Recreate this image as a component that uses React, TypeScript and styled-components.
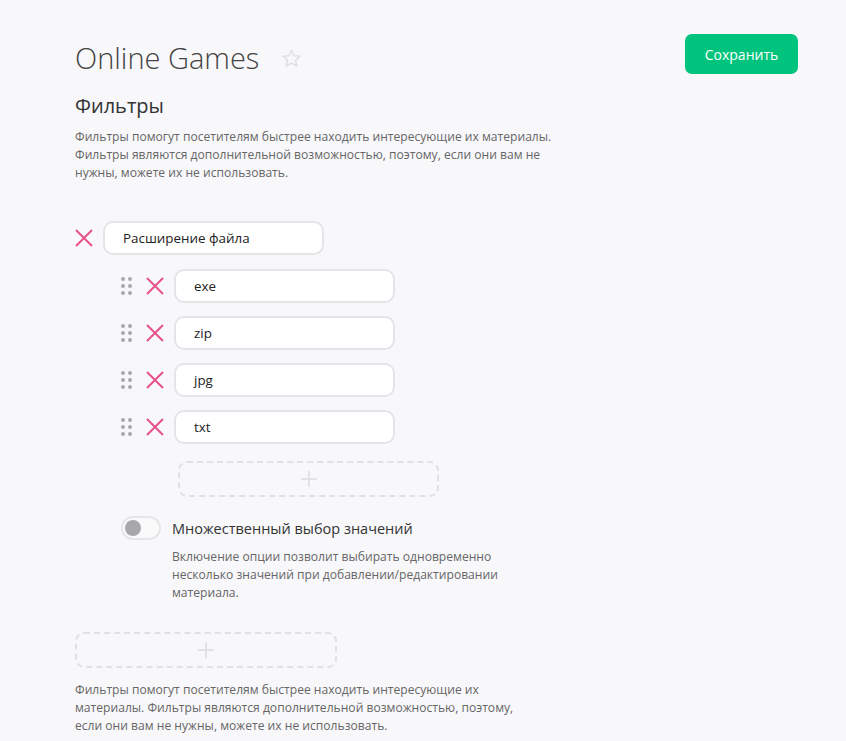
import React from "react";
import styled, { createGlobalStyle } from "styled-components";

const GlobalStyle = createGlobalStyle`
  html, body {
    margin: 0;
    background: #f8f8fb;
  }
  body {
    font-family: "Open Sans", "Noto Sans", sans-serif;
    color: #333;
  }
`;

const Page = styled.div`
  padding: 34px 48px 20px 75px;
`;

const Header = styled.div`
  display: flex;
  justify-content: space-between;
  align-items: flex-start;
`;

const TitleWrap = styled.div`
  display: flex;
  align-items: center;
  gap: 22px;
  margin-top: 4px;
`;

const Title = styled.h1`
  margin: 0;
  font-size: 29px;
  font-weight: 300;
  color: #444;
  line-height: 40px;
`;

const SaveButton = styled.button`
  width: 113px;
  height: 40px;
  border: none;
  border-radius: 7px;
  background: #00c47d;
  color: #fff;
  font-family: inherit;
  font-size: 14px;
`;

const Heading = styled.h2`
  margin: 14px 0 0;
  font-size: 20px;
  font-weight: 400;
  color: #333;
  line-height: 28px;
`;

const Note = styled.p<{ $width: number }>`
  margin: 0;
  max-width: ${(p) => p.$width}px;
  font-size: 12.1px;
  line-height: 18px;
  color: #666;
`;

const Intro = styled(Note)`
  margin-top: 8px;
`;

const Group = styled.div`
  margin-top: 39px;
`;

const Row = styled.div`
  display: flex;
  align-items: center;
  gap: 10px;
`;

const Field = styled.div`
  box-sizing: border-box;
  width: 221px;
  height: 34px;
  padding: 0 18px;
  display: flex;
  align-items: center;
  background: #fff;
  border: 2px solid #e4e4e9;
  border-radius: 10px;
  font-size: 13.4px;
  color: #222;
`;

const Values = styled.div`
  margin: 14px 0 0 46px;
  display: flex;
  flex-direction: column;
  gap: 13px;
`;

const ValueRow = styled(Row)`
  gap: 0;
`;

const Handle = styled.div`
  display: grid;
  grid-template-columns: repeat(2, 4px);
  grid-auto-rows: 4px;
  gap: 3px;
  margin-right: 14px;
`;

const Dot = styled.span`
  width: 4px;
  height: 4px;
  border-radius: 50%;
  background: #aaa;
`;

const Remove = styled.span`
  flex: none;
  display: flex;
  width: 18px;
  height: 18px;
`;

const ValueRemove = styled(Remove)`
  margin-right: 10px;
`;

const AddBox = styled.div<{ $width: number }>`
  box-sizing: border-box;
  width: ${(p) => p.$width}px;
  height: 36px;
  border: 2px dashed #e0e0e5;
  border-radius: 9px;
  display: flex;
  align-items: center;
  justify-content: center;
`;

const AddValue = styled(AddBox)`
  margin: 4px 0 0 57px;
`;

const ToggleRow = styled(Row)`
  margin: 19px 0 0 46px;
  gap: 11px;
`;

const Toggle = styled.div`
  box-sizing: border-box;
  width: 40px;
  height: 24px;
  border: 2px solid #e6e6ea;
  border-radius: 12px;
  background: #fafafa;
  display: flex;
  align-items: center;
  padding-left: 2px;
`;

const Knob = styled.span`
  width: 16px;
  height: 16px;
  border-radius: 50%;
  background: #a8a8ac;
`;

const ToggleLabel = styled.span`
  font-size: 14.5px;
  color: #333;
`;

const ToggleNote = styled(Note)`
  margin: 8px 0 0 97px;
`;

const AddFilter = styled(AddBox)`
  margin-top: 30px;
`;

const Outro = styled(Note)`
  margin-top: 13px;
`;

const Cross = () => (
  <svg width="18" height="18" viewBox="0 0 18 18">
    <path d="M1 1L17 17M17 1L1 17" stroke="#e8528a" strokeWidth="2" />
  </svg>
);

const Plus = () => (
  <svg width="18" height="18" viewBox="0 0 18 18">
    <path d="M9 1V17M1 9H17" stroke="#dcdce0" strokeWidth="1.5" />
  </svg>
);

const Star = () => (
  <svg width="21" height="21" viewBox="0 0 24 24">
    <path
      d="M12 2.5l2.9 6.3 6.8.7-5.1 4.6 1.5 6.7L12 17.3l-6.1 3.5 1.5-6.7-5.1-4.6 6.8-.7z"
      fill="none"
      stroke="#dedee4"
      strokeWidth="1.7"
      strokeLinejoin="round"
    />
  </svg>
);

const values = ["exe", "zip", "jpg", "txt"];

const App = () => {
  return (
    <Page>
      <GlobalStyle />
      <Header>
        <TitleWrap>
          <Title>Online Games</Title>
          <Star />
        </TitleWrap>
        <SaveButton>Сохранить</SaveButton>
      </Header>
      <Heading>Фильтры</Heading>
      <Intro $width={500}>
        Фильтры помогут посетителям быстрее находить интересующие их материалы.
        Фильтры являются дополнительной возможностью, поэтому, если они вам не
        нужны, можете их не использовать.
      </Intro>

      <Group>
        <Row>
          <Remove>
            <Cross />
          </Remove>
          <Field>Расширение файла</Field>
        </Row>
        <Values>
          {values.map((v) => (
            <ValueRow key={v}>
              <Handle>
                {Array.from({ length: 6 }).map((_, i) => (
                  <Dot key={i} />
                ))}
              </Handle>
              <ValueRemove>
                <Cross />
              </ValueRemove>
              <Field>{v}</Field>
            </ValueRow>
          ))}
          <AddValue $width={261}>
            <Plus />
          </AddValue>
        </Values>
        <ToggleRow>
          <Toggle>
            <Knob />
          </Toggle>
          <ToggleLabel>Множественный выбор значений</ToggleLabel>
        </ToggleRow>
        <ToggleNote $width={340}>
          Включение опции позволит выбирать одновременно несколько значений при
          добавлении/редактировании материала.
        </ToggleNote>
      </Group>

      <AddFilter $width={262}>
        <Plus />
      </AddFilter>
      <Outro $width={450}>
        Фильтры помогут посетителям быстрее находить интересующие их материалы.
        Фильтры являются дополнительной возможностью, поэтому, если они вам не
        нужны, можете их не использовать.
      </Outro>
    </Page>
  );
};

export default App;
